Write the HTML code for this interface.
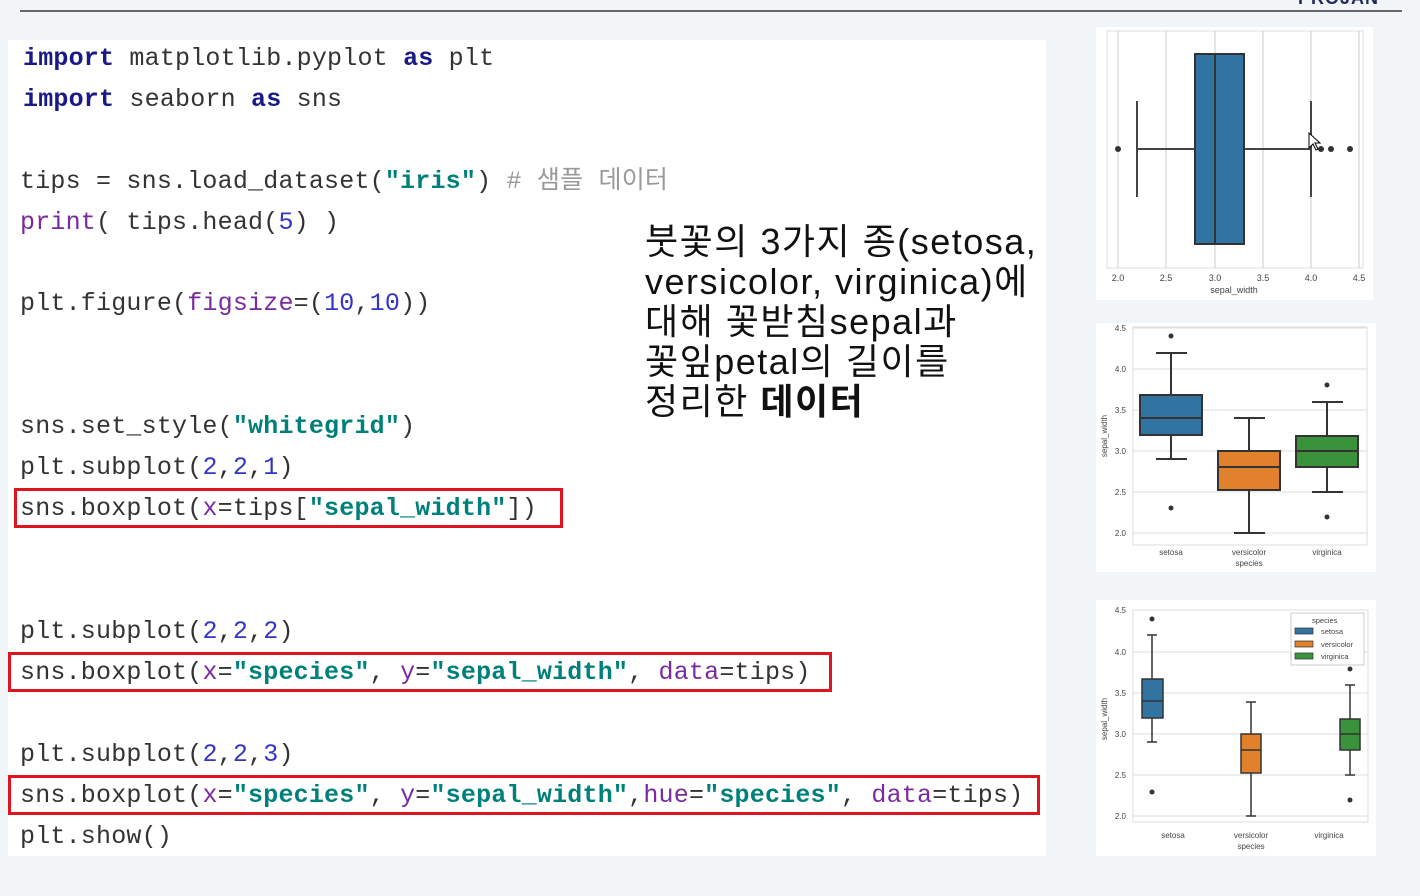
<!DOCTYPE html>
<html><head><meta charset="utf-8"><style>
body{margin:0;width:1420px;height:896px;background:#f1f5f8;position:relative;overflow:hidden;font-family:"Liberation Sans","Noto Sans CJK KR",sans-serif}
.topline{position:absolute;left:20px;top:10px;width:1382px;height:2px;background:#666}
.brand{position:absolute;left:1298px;top:-12px;font:bold 18px "Liberation Sans",sans-serif;color:#1f2a5a;letter-spacing:1px}
.panel{position:absolute;left:8px;top:40px;width:1038px;height:816px;background:#fff}
.code{position:absolute;left:20px;font-family:"Liberation Mono","Noto Sans CJK KR",monospace;font-size:25px;letter-spacing:0.2px;color:#333;white-space:pre;line-height:30px}
.k{color:#1a1a86;font-weight:bold}.s{color:#00807a;font-weight:bold}.n{color:#3434c8}.p{color:#7a2aa0}.c{color:#999}
.box{position:absolute;border:3px solid #e0141e}
.desc{position:absolute;left:645px;top:222px;font-size:36px;letter-spacing:1.5px;line-height:40px;color:#111}
svg{position:absolute;left:0;top:0}
</style></head><body>
<div class="brand">PROJAN</div>
<div class="topline"></div>
<div class="panel"></div>
<div class="code" style="top:44px;left:23px"><span class="k">import</span> matplotlib.pyplot <span class="k">as</span> plt</div>
<div class="code" style="top:85px;left:23px"><span class="k">import</span> seaborn <span class="k">as</span> sns</div>
<div class="code" style="top:167px">tips = sns.load_dataset(<span class="s">"iris"</span>) <span class="c"># 샘플 데이터</span></div>
<div class="code" style="top:208px"><span class="p">print</span>( tips.head(<span class="n">5</span>) )</div>
<div class="code" style="top:289px">plt.figure(<span class="p">figsize</span>=(<span class="n">10</span>,<span class="n">10</span>))</div>
<div class="code" style="top:412px">sns.set_style(<span class="s">"whitegrid"</span>)</div>
<div class="code" style="top:453px">plt.subplot(<span class="n">2</span>,<span class="n">2</span>,<span class="n">1</span>)</div>
<div class="code" style="top:494px">sns.boxplot(<span class="p">x</span>=tips[<span class="s">"sepal_width"</span>])</div>
<div class="code" style="top:617px">plt.subplot(<span class="n">2</span>,<span class="n">2</span>,<span class="n">2</span>)</div>
<div class="code" style="top:658px">sns.boxplot(<span class="p">x</span>=<span class="s">"species"</span>, <span class="p">y</span>=<span class="s">"sepal_width"</span>, <span class="p">data</span>=tips)</div>
<div class="code" style="top:740px">plt.subplot(<span class="n">2</span>,<span class="n">2</span>,<span class="n">3</span>)</div>
<div class="code" style="top:781px">sns.boxplot(<span class="p">x</span>=<span class="s">"species"</span>, <span class="p">y</span>=<span class="s">"sepal_width"</span>,<span class="p">hue</span>=<span class="s">"species"</span>, <span class="p">data</span>=tips)</div>
<div class="code" style="top:822px">plt.show()</div>
<div class="box" style="left:14px;top:488px;width:543px;height:34px"></div>
<div class="box" style="left:8px;top:652px;width:818px;height:34px"></div>
<div class="box" style="left:8px;top:775px;width:1026px;height:34px"></div>
<div class="desc">붓꽃의 3가지 종(setosa,<br>versicolor, virginica)에<br>대해 꽃받침sepal과<br>꽃잎petal의 길이를<br>정리한 <b>데이터</b></div>

<svg width="1420" height="896" font-family="Liberation Sans,sans-serif" font-size="9" fill="#444">
<rect x="1096" y="27" width="277" height="273" fill="#fff"/>
<rect x="1107" y="31" width="256" height="237" fill="none" stroke="#ddd"/>
<g stroke="#ccc"><line x1="1118" y1="31" x2="1118" y2="268"/><line x1="1166" y1="31" x2="1166" y2="268"/><line x1="1215" y1="31" x2="1215" y2="268"/><line x1="1263" y1="31" x2="1263" y2="268"/><line x1="1311" y1="31" x2="1311" y2="268"/><line x1="1359" y1="31" x2="1359" y2="268"/></g>
<g stroke="#444" stroke-width="2"><line x1="1137" y1="149" x2="1195" y2="149"/><line x1="1244" y1="149" x2="1311" y2="149"/><line x1="1137" y1="101" x2="1137" y2="197"/><line x1="1311" y1="101" x2="1311" y2="197"/></g>
<rect x="1195" y="54" width="49" height="190" fill="#3274a1" stroke="#333" stroke-width="2"/>
<line x1="1215" y1="54" x2="1215" y2="244" stroke="#333" stroke-width="2"/>
<g fill="#333"><circle cx="1118" cy="149" r="3"/><circle cx="1321" cy="149" r="3"/><circle cx="1331" cy="149" r="3"/><circle cx="1350" cy="149" r="3"/></g>
<g text-anchor="middle"><text x="1118" y="281">2.0</text><text x="1166" y="281">2.5</text><text x="1215" y="281">3.0</text><text x="1263" y="281">3.5</text><text x="1311" y="281">4.0</text><text x="1359" y="281">4.5</text><text x="1234" y="293">sepal_width</text></g>
<path d="M1309 133 L1309 148 L1313 144 L1316 150 L1318 149 L1315 143 L1320 143 Z" fill="#fff" stroke="#000" stroke-width="1"/>

<rect x="1096" y="323" width="280" height="249" fill="#fff"/>
<rect x="1133" y="327" width="234" height="218" fill="none" stroke="#ddd"/>
<g stroke="#ddd"><line x1="1133" y1="328" x2="1367" y2="328"/><line x1="1133" y1="369" x2="1367" y2="369"/><line x1="1133" y1="410" x2="1367" y2="410"/><line x1="1133" y1="451" x2="1367" y2="451"/><line x1="1133" y1="492" x2="1367" y2="492"/><line x1="1133" y1="533" x2="1367" y2="533"/></g>
<g font-size="8" text-anchor="end"><text x="1126" y="331">4.5</text><text x="1126" y="372">4.0</text><text x="1126" y="413">3.5</text><text x="1126" y="454">3.0</text><text x="1126" y="495">2.5</text><text x="1126" y="536">2.0</text></g>
<text x="1107" y="436" font-size="8" transform="rotate(-90 1107 436)" text-anchor="middle">sepal_width</text>
<g stroke="#333" stroke-width="2">
<line x1="1171" y1="353" x2="1171" y2="459"/><line x1="1156" y1="353" x2="1187" y2="353"/><line x1="1156" y1="459" x2="1187" y2="459"/>
<line x1="1249" y1="418" x2="1249" y2="533"/><line x1="1234" y1="418" x2="1265" y2="418"/><line x1="1234" y1="533" x2="1265" y2="533"/>
<line x1="1327" y1="402" x2="1327" y2="492"/><line x1="1312" y1="402" x2="1343" y2="402"/><line x1="1312" y1="492" x2="1343" y2="492"/>
</g>
<rect x="1140" y="395" width="62" height="40" fill="#3274a1" stroke="#333" stroke-width="2"/><line x1="1140" y1="418" x2="1202" y2="418" stroke="#333" stroke-width="2"/>
<rect x="1218" y="451" width="62" height="39" fill="#e1812c" stroke="#333" stroke-width="2"/><line x1="1218" y1="467" x2="1280" y2="467" stroke="#333" stroke-width="2"/>
<rect x="1296" y="436" width="62" height="31" fill="#3a923a" stroke="#333" stroke-width="2"/><line x1="1296" y1="451" x2="1358" y2="451" stroke="#333" stroke-width="2"/>
<g fill="#333"><circle cx="1171" cy="336" r="2.5"/><circle cx="1171" cy="508" r="2.5"/><circle cx="1327" cy="385" r="2.5"/><circle cx="1327" cy="517" r="2.5"/></g>
<g font-size="8" text-anchor="middle"><text x="1171" y="555">setosa</text><text x="1249" y="555">versicolor</text><text x="1327" y="555">virginica</text><text x="1249" y="566">species</text></g>

<rect x="1096" y="600" width="280" height="256" fill="#fff"/>
<rect x="1133" y="610" width="235" height="212" fill="none" stroke="#ddd"/>
<g stroke="#ddd"><line x1="1133" y1="610" x2="1368" y2="610"/><line x1="1133" y1="652" x2="1368" y2="652"/><line x1="1133" y1="693" x2="1368" y2="693"/><line x1="1133" y1="734" x2="1368" y2="734"/><line x1="1133" y1="775" x2="1368" y2="775"/><line x1="1133" y1="816" x2="1368" y2="816"/></g>
<g font-size="8" text-anchor="end"><text x="1126" y="613">4.5</text><text x="1126" y="655">4.0</text><text x="1126" y="696">3.5</text><text x="1126" y="737">3.0</text><text x="1126" y="778">2.5</text><text x="1126" y="819">2.0</text></g>
<text x="1107" y="719" font-size="8" transform="rotate(-90 1107 719)" text-anchor="middle">sepal_width</text>
<g stroke="#333" stroke-width="1.5">
<line x1="1152" y1="635" x2="1152" y2="742"/><line x1="1147" y1="635" x2="1157" y2="635"/><line x1="1147" y1="742" x2="1157" y2="742"/>
<line x1="1251" y1="702" x2="1251" y2="816"/><line x1="1246" y1="702" x2="1256" y2="702"/><line x1="1246" y1="816" x2="1256" y2="816"/>
<line x1="1350" y1="685" x2="1350" y2="775"/><line x1="1345" y1="685" x2="1355" y2="685"/><line x1="1345" y1="775" x2="1355" y2="775"/>
</g>
<rect x="1142" y="679" width="21" height="39" fill="#3274a1" stroke="#333" stroke-width="1.5"/><line x1="1142" y1="701" x2="1163" y2="701" stroke="#333" stroke-width="1.5"/>
<rect x="1241" y="734" width="20" height="39" fill="#e1812c" stroke="#333" stroke-width="1.5"/><line x1="1241" y1="750" x2="1261" y2="750" stroke="#333" stroke-width="1.5"/>
<rect x="1340" y="719" width="20" height="31" fill="#3a923a" stroke="#333" stroke-width="1.5"/><line x1="1340" y1="734" x2="1360" y2="734" stroke="#333" stroke-width="1.5"/>
<g fill="#333"><circle cx="1152" cy="619" r="2.5"/><circle cx="1152" cy="792" r="2.5"/><circle cx="1350" cy="669" r="2.5"/><circle cx="1350" cy="800" r="2.5"/></g>
<rect x="1291" y="613" width="73" height="52" fill="#fff" stroke="#ccc"/>
<g font-size="7.5"><text x="1312" y="623">species</text>
<rect x="1295" y="628" width="18" height="6" fill="#3274a1" stroke="#333" stroke-width="0.7"/><text x="1321" y="634">setosa</text>
<rect x="1295" y="641" width="18" height="6" fill="#e1812c" stroke="#333" stroke-width="0.7"/><text x="1321" y="647">versicolor</text>
<rect x="1295" y="653" width="18" height="6" fill="#3a923a" stroke="#333" stroke-width="0.7"/><text x="1321" y="659">virginica</text></g>
<g font-size="8" text-anchor="middle"><text x="1173" y="838">setosa</text><text x="1251" y="838">versicolor</text><text x="1329" y="838">virginica</text><text x="1251" y="849">species</text></g>
</svg>
</body></html>
